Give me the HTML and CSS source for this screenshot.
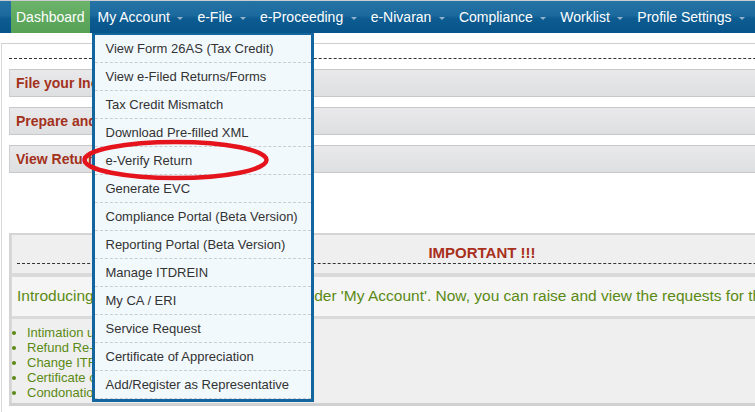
FILE: index.html
```html
<!DOCTYPE html>
<html>
<head>
<meta charset="utf-8">
<link rel="stylesheet" href="styles.css">
</head>
<body>
<div class="page">
  <nav class="nav">
    <div class="nav-item home">Dashboard</div>
    <div class="nav-item active">My Account<span class="caret"></span>
      <ul class="dropdown">
        <li>View Form 26AS (Tax Credit)</li>
        <li>View e-Filed Returns/Forms</li>
        <li>Tax Credit Mismatch</li>
        <li>Download Pre-filled XML</li>
        <li>e-Verify Return</li>
        <li>Generate EVC</li>
        <li>Compliance Portal (Beta Version)</li>
        <li>Reporting Portal (Beta Version)</li>
        <li>Manage ITDREIN</li>
        <li>My CA / ERI</li>
        <li>Service Request</li>
        <li>Certificate of Appreciation</li>
        <li>Add/Register as Representative</li>
      </ul>
    </div>
    <div class="nav-item">e-File<span class="caret"></span></div>
    <div class="nav-item">e-Proceeding<span class="caret"></span></div>
    <div class="nav-item">e-Nivaran<span class="caret"></span></div>
    <div class="nav-item">Compliance<span class="caret"></span></div>
    <div class="nav-item">Worklist<span class="caret"></span></div>
    <div class="nav-item">Profile Settings<span class="caret"></span></div>
  </nav>

  <main class="content">
    <div class="content-head"></div>
    <div class="panel">File your Income Tax Return</div>
    <div class="panel">Prepare and Submit Online Form</div>
    <div class="panel">View Returns / Forms</div>

    <section class="notice">
      <div class="notice-head"><div class="notice-title">IMPORTANT !!!</div></div>
      <div class="notice-intro">Introducing this 'Service Request' option under 'My Account'. Now, you can raise and view the requests for the following :</div>
      <div class="notice-list">
        <ul>
          <li>Intimation u/s 143(1)</li>
          <li>Refund Re-issue</li>
          <li>Change ITR-V Mode</li>
          <li>Certificate of Appreciation</li>
          <li>Condonation Request</li>
        </ul>
      </div>
    </section>
  </main>

  <svg class="mark" width="755" height="412" viewBox="0 0 755 412">
    <ellipse cx="175.5" cy="160" rx="91" ry="18" fill="none" stroke="#e5141c" stroke-width="4.5"/>
  </svg>
</div>
</body>
</html>
```

FILE: styles.css
```css
* { box-sizing: border-box; }
html, body { margin: 0; padding: 0; }
body {
  font-family: "Liberation Sans", Arial, sans-serif;
  background: #fff;
  width: 755px;
  height: 412px;
  overflow: hidden;
}
.page { position: relative; width: 755px; height: 412px; overflow: hidden; }

.nav {
  display: flex;
  gap: 2px;
  width: 980px;
  height: 33px;
  padding-left: 11px;
  border-top: 1px solid #c9ccd0;
  background: linear-gradient(#2673a5 0%, #1b6a9e 45%, #0c5b91 55%, #07548a 100%);
}
.nav-item {
  position: relative;
  display: flex;
  align-items: center;
  height: 32px;
  padding: 0 6px;
  color: #fff;
  font-size: 14px;
  white-space: nowrap;
}
.nav-item.home {
  padding: 0 5px;
  background: linear-gradient(#6bb36a, #55a155);
}
.caret {
  display: inline-block;
  width: 0; height: 0;
  margin-left: 7.5px;
  margin-top: 3px;
  border-left: 3px solid transparent;
  border-right: 3px solid transparent;
  border-top: 3px solid #93b1c8;
}
.dropdown {
  position: absolute;
  top: 32px;
  left: 0;
  width: 222px;
  margin: 0;
  padding: 0;
  list-style: none;
  background: #f2f9fd;
  border: 3px solid #13669d;
  border-top-width: 2px;
  z-index: 5;
}
.dropdown li {
  height: 28px;
  line-height: 27px;
  padding-left: 11px;
  font-size: 13px;
  color: #333;
  border-bottom: 1px dashed #c9ccd0;
}

.content {
  margin: 10px 0 0 1px;
  width: 970px;
  height: 370px;
  border-top: 1px solid #cfcfcf;
  border-left: 1px solid #d8d8d8;
  padding-left: 7px;
}
.content-head {
  height: 15px;
  border-bottom: 1px dashed #333;
}
.panel {
  height: 28px;
  margin-top: 10px;
  line-height: 26px;
  padding-left: 6px;
  font-size: 14px;
  font-weight: bold;
  color: #a3311b;
  background: linear-gradient(#e9e9eb, #dedfe1);
  border-top: 1px solid #c8c8c8;
  border-bottom: 1px solid #c8c8c8;
  border-left: 1px solid #cfcfcf;
  white-space: nowrap;
}
.notice {
  margin-top: 60px;
  width: 938px;
  border-top: 2px solid #d4d4d4;
  border-left: 2px solid #d4d4d4;
  border-bottom: 3px solid #d0d0d0;
  background: #dadada;
}
.notice-head {
  height: 38px;
  background: #efefef;
  padding: 0 0 0 5px;
  margin-left: 1px;
}
.notice-title {
  height: 29px;
  padding-top: 9px;
  text-align: center;
  font-size: 15px;
  font-weight: bold;
  color: #a8301c;
  border-bottom: 1px dashed #333;
}
.notice-intro {
  margin-top: 4px;
  margin-left: 1px;
  height: 39px;
  line-height: 38px;
  padding-left: 5px;
  background: #f5f5f5;
  font-size: 15.5px;
  color: #5b8a14;
  white-space: nowrap;
  overflow: hidden;
}
.notice-list {
  margin-top: 3px;
  margin-left: 1px;
  height: 84px;
  padding-top: 6px;
  background: #efefef;
}
.notice-list ul {
  margin: 0;
  padding-left: 15px;
  font-size: 13px;
  line-height: 15px;
  color: #5b8a14;
  white-space: nowrap;
}
.mark {
  position: absolute;
  left: 0;
  top: 0;
  z-index: 10;
  pointer-events: none;
}
```
